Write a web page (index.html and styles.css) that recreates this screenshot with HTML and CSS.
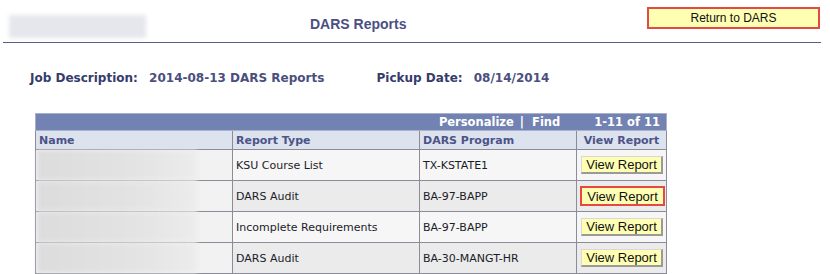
FILE: index.html
```html
<!DOCTYPE html>
<html lang="en">
<head>
<meta charset="UTF-8">
<title>DARS Reports</title>
<link rel="stylesheet" href="styles.css">
</head>
<body>
<div class="page-header">
  <div class="blur-name"></div>
  <h1 class="page-title">DARS Reports</h1>
  <button class="btn btn-return">Return to DARS</button>
</div>

<div class="job-info">
  <span class="label">Job Description:</span>
  <span class="value">2014-08-13 DARS Reports</span>
  <span class="label label-pickup">Pickup Date:</span>
  <span class="value">08/14/2014</span>
</div>

<table class="grid">
  <colgroup>
    <col class="col-name">
    <col class="col-type">
    <col class="col-prog">
    <col class="col-view">
  </colgroup>
  <thead>
    <tr class="grid-nav">
      <th colspan="4">
        <span class="nav-links">Personalize <span class="sep">|</span>&nbsp; Find</span>
        <span class="nav-count">1-11 of 11</span>
      </th>
    </tr>
    <tr class="grid-head">
      <th>Name</th>
      <th>Report Type</th>
      <th>DARS Program</th>
      <th class="head-view">View Report</th>
    </tr>
  </thead>
  <tbody>
    <tr class="odd">
      <td class="cell-name"><div class="blur-cell"></div></td>
      <td>KSU Course List</td>
      <td>TX-KSTATE1</td>
      <td class="cell-view"><button class="btn btn-view">View Report</button></td>
    </tr>
    <tr class="even">
      <td class="cell-name"><div class="blur-cell"></div></td>
      <td>DARS Audit</td>
      <td>BA-97-BAPP</td>
      <td class="cell-view"><button class="btn btn-view marked">View Report</button></td>
    </tr>
    <tr class="odd">
      <td class="cell-name"><div class="blur-cell"></div></td>
      <td>Incomplete Requirements</td>
      <td>BA-97-BAPP</td>
      <td class="cell-view"><button class="btn btn-view">View Report</button></td>
    </tr>
    <tr class="even">
      <td class="cell-name"><div class="blur-cell"></div></td>
      <td>DARS Audit</td>
      <td>BA-30-MANGT-HR</td>
      <td class="cell-view"><button class="btn btn-view">View Report</button></td>
    </tr>
  </tbody>
</table>
</body>
</html>
```

FILE: styles.css
```css
body {
  margin: 0;
  background: #fff;
  font-family: "DejaVu Sans", Verdana, sans-serif;
  overflow: hidden;
}

/* top bar */
.page-header {
  display: flex;
  align-items: center;
  height: 42px;
  margin: 0 9px 0 3px;
  border-bottom: 1px solid #565c8e;
}
.blur-name {
  width: 137px;
  height: 23px;
  margin-left: 6px;
  margin-top: 11px;
  background: #e6e7ec;
  filter: blur(2px);
}
.page-title {
  margin: 6px 0 0 164px;
  font-family: "Liberation Sans", Arial, sans-serif;
  font-size: 14px;
  font-weight: bold;
  color: #4a4f84;
}
.btn {
  font-family: "Liberation Sans", Arial, sans-serif;
  font-size: 12px;
  color: #111;
  background: #ffffb4;
  cursor: pointer;
  padding: 0;
}
.btn-return {
  margin-left: auto;
  margin-top: -6px;
  margin-right: 1px;
  width: 173px;
  height: 22px;
  border: 2px solid #e24a43;
}

/* job line */
.job-info {
  margin: 28px 0 0 30px;
  height: 16px;
  font-size: 12px;
  font-weight: bold;
  white-space: nowrap;
}
.job-info .label { color: #353c6c; }
.job-info .value { color: #4a4f7e; margin-left: 7px; }
.job-info .label-pickup { margin-left: 48px; }

/* grid */
.grid {
  margin: 26px 0 0 35px;
  width: 631px;
  border-collapse: collapse;
  font-size: 11px;
  table-layout: fixed;
}
.col-name { width: 197px; }
.col-type { width: 187px; }
.col-prog { width: 157px; }
.col-view { width: 90px; }

.grid th, .grid td {
  border: 1px solid #8b8b99;
  padding: 0 3px;
  text-align: left;
  white-space: nowrap;
}
.grid-nav th {
  background: #7282b2;
  border-color: #a9b0c9;
  height: 16px;
  color: #fff;
  font-size: 11.5px;
  text-align: right;
  padding: 0 6px 0 0;
}
.nav-links { margin-right: 30px; }
.nav-links .sep { margin-left: 2px; }
.grid-head th {
  background: #dce3ee;
  color: #4d5387;
  height: 18px;
  border-color: #8b8b99;
}
.grid-head .head-view { text-align: center; }

.grid td {
  height: 30px;
  color: #1b1b2a;
}
.odd td { background: #f6f6f6; }
.even td { background: #ebebeb; }
.grid td.cell-name {
  padding: 0 0 0 1px;
  background: #f2f2f2;
}
.blur-cell {
  width: 160px;
  height: 30px;
  background: linear-gradient(90deg, #dcdcdc, #e3e3e3 60%, #ececec);
  filter: blur(2px);
}
.grid td.cell-view { padding: 0 0 0 4px; }
.btn-view {
  width: 82px;
  height: 18px;
  border: 1px solid #d8d8d8;
  border-right: 2px solid #9a9a9a;
  border-bottom: 2px solid #9a9a9a;
  font-size: 13px;
}
.btn-view.marked {
  border: 2px solid #e24a43;
  width: 85px;
  height: 20px;
  margin-left: -1px;
}
```
